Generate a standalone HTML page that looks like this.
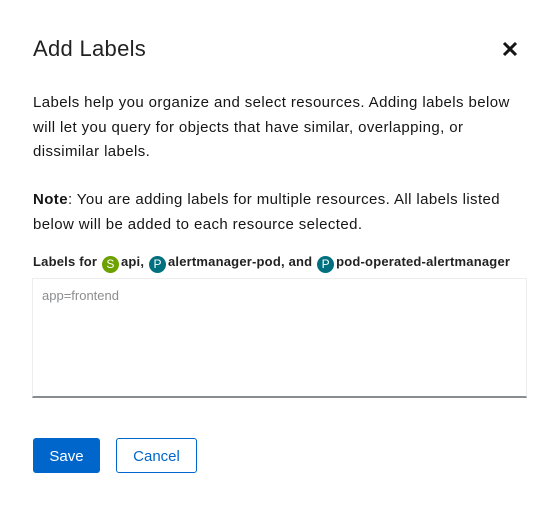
<!DOCTYPE html>
<html><head><style>
body{margin:0;width:559px;height:507px;background:#fff;font-family:"Liberation Sans",sans-serif;color:#151515;position:relative;overflow:hidden}
.t{position:absolute;left:33px;top:36px;font-size:22px;color:#222;letter-spacing:0.3px}
.x{position:absolute;left:501px;top:40px}
p{position:absolute;left:33px;margin:0;font-size:15px;line-height:24.5px;white-space:nowrap;letter-spacing:0.4px}
.lab{position:absolute;left:33px;top:254px;font-size:13px;font-weight:bold;color:#222;white-space:nowrap;letter-spacing:0.2px}
.b{display:inline-block;width:17px;height:17px;border-radius:50%;color:#fff;text-align:center;line-height:17px;font-size:12px;font-weight:normal;vertical-align:-2px;margin:0 2px 0 1px;letter-spacing:0}
.ta{position:absolute;left:32px;top:278px;width:493px;height:117px;border:1px solid #ededed;border-bottom:2px solid #8a8d90;color:#8b8d8f;font-size:13px;box-sizing:content-box}
.ta span{position:absolute;left:0;top:9px}
.btn{position:absolute;top:438px;height:35px;border-radius:3px;font-size:15px;line-height:37px;text-align:center;box-sizing:border-box}
</style></head><body>
<div class="t">Add Labels</div>
<svg class="x" width="18" height="18" viewBox="0 0 18 18"><path d="M3 3L15 15M15 3L3 15" stroke="#151515" stroke-width="3"/></svg>
<p style="top:91px">Labels help you organize and select resources. Adding labels below<br>will let you query for objects that have similar, overlapping, or<br>dissimilar labels.</p>
<p style="top:188px"><b>Note</b>: You are adding labels for multiple resources. All labels listed<br>below will be added to each resource selected.</p>
<div class="lab">Labels for <span class="b" style="background:#6ca100">S</span>api, <span class="b" style="background:#00707f">P</span>alertmanager-pod, and <span class="b" style="background:#00707f">P</span>pod-operated-alertmanager</div>
<div class="ta"><span style="left:9px">app=frontend</span></div>
<div class="btn" style="left:33px;width:67px;background:#0066cc;color:#fff">Save</div>
<div class="btn" style="left:116px;width:81px;border:1px solid #0066cc;color:#0066cc;line-height:35px">Cancel</div>
</body></html>
